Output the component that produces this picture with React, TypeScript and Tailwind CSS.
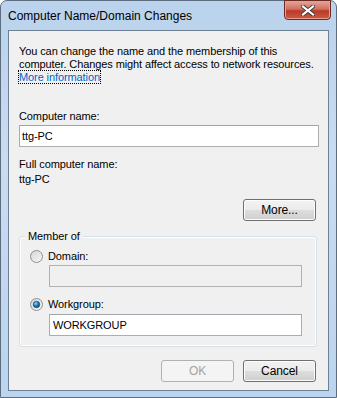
import React from 'react';

const font = { fontFamily: '"Liberation Sans", Arial, sans-serif' };

function Radio({ checked }: { checked?: boolean }) {
  return (
    <svg width="13" height="13" viewBox="0 0 13 13" className="shrink-0">
      <defs>
        <linearGradient id={checked ? 'rg1' : 'rg0'} x1="0" y1="0" x2="1" y2="1">
          <stop offset="0" stopColor="#d4d4d4" />
          <stop offset="1" stopColor="#f8f8f8" />
        </linearGradient>
        <radialGradient id="dot" cx="0.4" cy="0.35" r="0.7">
          <stop offset="0" stopColor="#9ad6f7" />
          <stop offset="0.5" stopColor="#1c7ab8" />
          <stop offset="1" stopColor="#0b3f6a" />
        </radialGradient>
      </defs>
      <circle cx="6.5" cy="6.5" r="6" fill={`url(#${checked ? 'rg1' : 'rg0'})`} stroke="#8f8f8f" strokeWidth="1" />
      {checked && <circle cx="6.5" cy="6.5" r="3.3" fill="url(#dot)" stroke="#1d4f78" strokeWidth="0.6" />}
    </svg>
  );
}

function Button({ label, disabled }: { label: string; disabled?: boolean }) {
  return (
    <div
      className={
        'w-[73px] h-[22px] rounded-[3px] border flex items-center justify-center text-[12px] leading-[14px] ' +
        (disabled
          ? 'border-[#adb2b5] bg-[#f4f4f4] text-[#a3a3a3]'
          : 'border-[#707070] bg-[linear-gradient(#f2f2f2_0%,#ebebeb_50%,#dddddd_51%,#cfcfcf_100%)] text-black shadow-[inset_0_0_0_1px_#fcfcfc]')
      }
    >
      {label}
    </div>
  );
}

export default function App() {
  return (
    <div className="w-[337px] h-[398px] overflow-hidden bg-white" style={font}>
      <div className="w-[337px] h-[398px] rounded-t-[7px] border border-[#5d6d80] bg-[linear-gradient(180deg,#bad2ec_0%,#c9dcf1_40%,#bcd4ee_100%)] flex flex-col">
        {/* title bar */}
        <div className="h-[29px] shrink-0 flex items-start justify-between">
          <span className="pl-[7px] pt-[7px] text-[12px] text-black leading-[16px]">Computer Name/Domain Changes</span>
          <div className="mr-[5px] w-[47px] h-[20px] -mt-px rounded-b-[4px] border border-[#6b2b25] bg-[linear-gradient(#e4a79c_0%,#d1705f_45%,#bc3a28_55%,#c95b3f_100%)] flex items-center justify-center shadow-[inset_0_0_0_1px_#ec9d8d]">
            <svg width="14" height="11" viewBox="0 0 14 11">
              <path d="M2 1.5 L12 9.5 M12 1.5 L2 9.5" stroke="#3b3b3b" strokeWidth="4" strokeLinecap="square" />
              <path d="M2 1.5 L12 9.5 M12 1.5 L2 9.5" stroke="#ffffff" strokeWidth="2.2" strokeLinecap="square" />
            </svg>
          </div>
        </div>
        {/* client area */}
        <div className="mx-[7px] h-[361px] shrink-0 border border-[#6e8093] bg-[#f0f0f0] pl-[10px] pr-[10px] pt-[14px] text-[11px] tracking-[-0.1px] leading-[13px] text-black">
          <p className="leading-[13px] whitespace-nowrap">
            You can change the name and the membership of this
            <br />
            computer. Changes might affect access to network resources.
            <br />
            <span className="text-[#0066cc] outline outline-1 outline-dotted outline-black">More information</span>
          </p>
          <div className="mt-[26px] h-[13px]">Computer name:</div>
          <div className="mt-[2px] h-[22px] w-[300px] border border-[#abadb3] border-t-[#a0a4ab] bg-white pl-[2px] leading-[20px]">ttg-PC</div>
          <div className="mt-[11px] h-[13px]">Full computer name:</div>
          <div className="mt-[2px] h-[13px]">ttg-PC</div>
          <div className="mt-[13px] flex justify-end pr-[2px]">
            <Button label="More..." />
          </div>
          {/* group box */}
          <div className="relative mt-[15px] w-[298px] h-[111px] rounded-[3px] border border-[#d5dfe5] shadow-[inset_0_0_0_1px_#ffffff] px-[10px] pt-[13px]">
            <span className="absolute left-[5px] -top-[8px] bg-[#f0f0f0] px-[3px] leading-[14px]">Member of</span>
            <div className="flex items-center gap-[5px] h-[13px]">
              <Radio />
              <span>Domain:</span>
            </div>
            <div className="ml-[19px] mt-[2px] h-[22px] w-[253px] border border-[#adb2b5] bg-[#f0f0f0]" />
            <div className="mt-[11px] flex items-center gap-[5px] h-[13px]">
              <Radio checked />
              <span>Workgroup:</span>
            </div>
            <div className="ml-[19px] mt-[3px] h-[22px] w-[253px] border border-[#abadb3] border-t-[#a0a4ab] bg-white pl-[3px] leading-[20px]">WORKGROUP</div>
          </div>
          <div className="mt-[13px] flex justify-end gap-[9px] pr-[2px]">
            <Button label="OK" disabled />
            <Button label="Cancel" />
          </div>
        </div>
      </div>
    </div>
  );
}
